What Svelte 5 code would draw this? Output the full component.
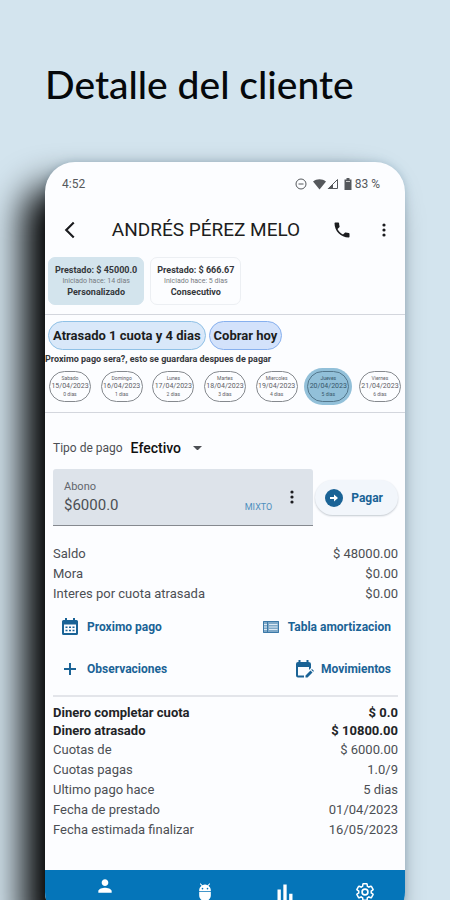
<script lang="ts">
  type Row = { label: string; value: string; strong?: boolean }

  const loans = [
    { amount: 'Prestado: $ 45000.0', started: 'Iniciado hace: 14 dias', kind: 'Personalizado' },
    { amount: 'Prestado: $ 666.67', started: 'Iniciado hace: 5 dias', kind: 'Consecutivo' },
  ]

  const days = [
    { name: 'Sabado', date: '15/04/2023', wait: '0 dias' },
    { name: 'Domingo', date: '16/04/2023', wait: '1 dias' },
    { name: 'Lunes', date: '17/04/2023', wait: '2 dias' },
    { name: 'Martes', date: '18/04/2023', wait: '3 dias' },
    { name: 'Miercoles', date: '19/04/2023', wait: '4 dias' },
    { name: 'Jueves', date: '20/04/2023', wait: '5 dias' },
    { name: 'Viernes', date: '21/04/2023', wait: '6 dias' },
  ]

  const balance: Row[] = [
    { label: 'Saldo', value: '$ 48000.00' },
    { label: 'Mora', value: '$0.00' },
    { label: 'Interes por cuota atrasada', value: '$0.00' },
  ]

  const details: Row[] = [
    { label: 'Dinero completar cuota', value: '$ 0.0', strong: true },
    { label: 'Dinero atrasado', value: '$ 10800.00', strong: true },
    { label: 'Cuotas de', value: '$ 6000.00' },
    { label: 'Cuotas pagas', value: '1.0/9' },
    { label: 'Ultimo pago hace', value: '5 dias' },
    { label: 'Fecha de prestado', value: '01/04/2023' },
    { label: 'Fecha estimada finalizar', value: '16/05/2023' },
  ]

  let selectedLoan = $state(0)
  let selectedDay = $state(5)
  let method = $state('Efectivo')
  let amount = $state('$6000.0')
</script>

{#snippet dots()}
  <svg class="dots" viewBox="0 0 24 24" aria-hidden="true">
    <circle cx="12" cy="4.5" r="2.4" />
    <circle cx="12" cy="12" r="2.4" />
    <circle cx="12" cy="19.5" r="2.4" />
  </svg>
{/snippet}

{#snippet rows(items: Row[])}
  <dl class="rows">
    {#each items as item}
      <div class="row" class:strong={item.strong}>
        <dt>{item.label}</dt>
        <dd>{item.value}</dd>
      </div>
    {/each}
  </dl>
{/snippet}

<div class="stage">
  <h1>Detalle del cliente</h1>

  <main class="phone">
    <div class="status">
      <span>4:52</span>
      <div class="status-icons">
        <svg class="dnd" viewBox="0 0 12 12" aria-hidden="true">
          <circle cx="6" cy="6" r="5" fill="none" stroke="currentColor" />
          <path d="M3.5 6h5" stroke="currentColor" />
        </svg>
        <svg class="signal" viewBox="0 0 26 12" aria-hidden="true">
          <path d="M0 3.4C3.8.4 9.2.4 13 3.4L6.5 11.5z" fill="currentColor" />
          <path d="M24.5 1.5v9h-9z" fill="none" stroke="currentColor" />
          <path d="M20 6v5h-5.500z" fill="currentColor" />
        </svg>
        <svg class="battery" viewBox="0 0 8 12" aria-hidden="true">
          <path d="M2.500 0h3v1.500H7.500V12H.5V1.500h2z" fill="currentColor" />
          <path d="M2 3.500h4" stroke="#ccc" />
        </svg>
        <span>83 %</span>
      </div>
    </div>

    <header>
      <button class="icon-button" aria-label="Volver">
        <svg class="back" viewBox="0 0 24 24" aria-hidden="true">
          <path d="M16.500 3L7.500 12l9 9" fill="none" stroke="currentColor" stroke-width="2.600" />
        </svg>
      </button>
      <h2>ANDRÉS PÉREZ MELO</h2>
      <button class="icon-button" aria-label="Llamar">
        <svg class="call" viewBox="0 0 24 24" aria-hidden="true">
          <path fill="currentColor" d="M6.620 10.790c1.440 2.830 3.760 5.140 6.590 6.590l2.200-2.200c.27-.27.67-.36 1.020-.24 1.120.37 2.330.57 3.570.57.55 0 1 .45 1 1V20c0 .55-.45 1-1 1-9.390 0-17-7.610-17-17 0-.55.45-1 1-1h3.500c.55 0 1 .45 1 1 0 1.250.2 2.450.57 3.570.11.35.03.74-.25 1.020l-2.200 2.200z" />
        </svg>
      </button>
      <button class="icon-button" aria-label="Más opciones">{@render dots()}</button>
    </header>

    <section class="loans">
      {#each loans as loan, index}
        <button class="loan" class:active={selectedLoan === index} onclick={() => (selectedLoan = index)}>
          <b>{loan.amount}</b>
          <span>{loan.started}</span>
          <b>{loan.kind}</b>
        </button>
      {/each}
    </section>

    <section class="schedule">
      <div class="chips">
        <button class="chip">Atrasado 1 cuota y 4 dias</button>
        <button class="chip today">Cobrar hoy</button>
      </div>
      <p>Proximo pago sera?, esto se guardara despues de pagar</p>
      <div class="days">
        {#each days as day, index}
          <button class="day" class:active={selectedDay === index} onclick={() => (selectedDay = index)}>
            <span>{day.name}</span>
            <span class="date">{day.date}</span>
            <span>{day.wait}</span>
          </button>
        {/each}
      </div>
    </section>

    <section class="payment">
      <div class="method">
        <label for="method">Tipo de pago</label>
        <div class="select">
          <select id="method" bind:value={method}>
            <option>Efectivo</option>
            <option>Mixto</option>
          </select>
          <svg viewBox="0 0 10 5" aria-hidden="true"><path d="M0 0h10L5 5z" fill="currentColor" /></svg>
        </div>
      </div>

      <div class="pay">
        <div class="field">
          <div class="entry">
            <label for="amount">Abono</label>
            <input id="amount" type="text" bind:value={amount} />
          </div>
          <button class="mixed">MIXTO</button>
          <button class="field-menu" aria-label="Opciones de abono">{@render dots()}</button>
        </div>
        <button class="submit">
          <svg viewBox="0 0 18 18" aria-hidden="true">
            <circle cx="9" cy="9" r="9" fill="currentColor" />
            <path d="M5 8h4V5.500L13 9l-4 3.500V10H5z" fill="#fff" />
          </svg>
          Pagar
        </button>
      </div>

      {@render rows(balance)}
    </section>

    <section class="actions">
      <button>
        <svg viewBox="0 0 18 18" aria-hidden="true">
          <path fill="currentColor" fill-rule="evenodd" d="M4 0h2v2h6V0h2v2h1.500Q17 2 17 3.500v12Q17 17 15.500 17h-13Q1 17 1 15.500v-12Q1 2 2.500 2H4zM3 6.500V15h12V6.500z" />
          <path stroke="currentColor" stroke-width="1.500" stroke-dasharray="2 1.500" d="M4.500 9.200h9M4.500 12.500h9" />
        </svg>
        Proximo pago
      </button>
      <button>
        <svg viewBox="0 0 18 18" aria-hidden="true">
          <path fill="#7fa9c8" d="M1 3h16v12H1z" />
          <path stroke="#dce9f4" d="M7 6.500h8.500M7 9h8.500M7 11.500h8.500M2 6.500h3M2 9h3M2 11.500h3" />
          <path fill="none" stroke="#3c79a8" d="M1.500 3.500h15v11h-15zM5.500 3.500v11" />
        </svg>
        Tabla amortizacion
      </button>
      <button>
        <svg viewBox="0 0 18 18" aria-hidden="true">
          <path fill="none" stroke="currentColor" stroke-width="2" d="M9 3v12M3 9h12" />
        </svg>
        Observaciones
      </button>
      <button>
        <svg viewBox="0 0 18 18" aria-hidden="true">
          <path fill="currentColor" d="M3.500 0h2v2h6V0h2v2Q16 2 16 4v4l-2 2V7H3v8.500h6v2H3q-2 0-2-2V4q0-2 2-2h.5z" />
          <path fill="currentColor" d="M10.500 15.500l5-5 2 2-5 5h-2zM16.200 9.800l.8-.8 2 2-.8.8z" />
        </svg>
        Movimientos
      </button>
    </section>

    <section class="details">
      {@render rows(details)}
    </section>

    <nav>
      <a class="current" href="#clientes" aria-label="Clientes">
        <svg viewBox="0 0 24 24" aria-hidden="true">
          <path fill="currentColor" d="M12 12c2.210 0 4-1.790 4-4s-1.790-4-4-4-4 1.790-4 4 1.790 4 4 4zm0 2c-2.670 0-8 1.340-8 4v2h16v-2c0-2.660-5.330-4-8-4z" />
        </svg>
      </a>
      <a href="#android" aria-label="Android">
        <svg viewBox="0 0 24 24" aria-hidden="true">
          <path fill="currentColor" d="M5 16c0 3.870 3.130 7 7 7s7-3.130 7-7v-4H5v4zM16.120 4.370l2.100-2.100-.82-.83-2.300 2.310C14.160 3.280 13.120 3 12 3s-2.160.28-3.090.75L6.600 1.440l-.82.83 2.100 2.100C6.140 5.640 5 7.680 5 10v1h14v-1c0-2.320-1.140-4.360-2.880-5.630zM9 9c-.55 0-1-.45-1-1s.45-1 1-1 1 .45 1 1-.45 1-1 1zm6 0c-.55 0-1-.45-1-1s.45-1 1-1 1 .45 1 1-.45 1-1 1z" />
        </svg>
      </a>
      <a href="#reportes" aria-label="Reportes">
        <svg viewBox="0 0 24 24" aria-hidden="true">
          <path fill="currentColor" d="M3 9h4v13H3zM10 3h4v19h-4zM17 14h4v8h-4z" />
        </svg>
      </a>
      <a href="#ajustes" aria-label="Ajustes">
        <svg viewBox="0 0 24 24" aria-hidden="true">
          <path fill="none" stroke="currentColor" stroke-width="1.800" d="M19.430 12.980c.04-.32.07-.64.07-.98 0-.34-.03-.66-.07-.98l2.110-1.650c.19-.15.24-.42.12-.64l-2-3.460c-.09-.16-.26-.25-.44-.25-.06 0-.12.01-.17.03l-2.490 1c-.52-.4-1.080-.73-1.690-.98l-.38-2.650C14.460 2.180 14.250 2 14 2h-4c-.25 0-.46.18-.49.42l-.38 2.650c-.61.25-1.170.59-1.690.98l-2.490-1c-.06-.02-.12-.03-.18-.03-.17 0-.34.09-.43.25l-2 3.460c-.13.22-.07.49.12.64l2.110 1.650c-.04.32-.07.65-.07.98 0 .33.03.66.07.98l-2.110 1.650c-.19.15-.24.42-.12.64l2 3.460c.09.16.26.25.44.25.06 0 .12-.01.17-.03l2.490-1c.52.4 1.080.73 1.690.98l.38 2.650c.03.24.24.42.49.42h4c.25 0 .46-.18.49-.42l.38-2.650c.61-.25 1.170-.59 1.690-.98l2.490 1c.06.02.12.03.18.03.17 0 .34-.09.43-.25l2-3.460c.12-.22.07-.49-.12-.64z" />
          <circle cx="12" cy="12" r="3.500" fill="none" stroke="currentColor" stroke-width="2" />
        </svg>
      </a>
    </nav>
  </main>
</div>

<style>
  :global(body) {
    margin: 0;
    background: #d3e4ee;
  }

  .stage {
    --ink: #1c1d20;
    --muted: #4c4f54;
    --blue: #1a6396;
    --line: #d3d6dd;
    box-sizing: border-box;
    height: 100vh;
    overflow: hidden;
    padding: 60px 10% 0;
    color: var(--ink);
    font-family: Roboto, "Liberation Sans", sans-serif;
  }

  h1 {
    margin: 0 0 54px;
    color: #05080b;
    font: 500 39px/48px Lato, "Open Sans", sans-serif;
    white-space: nowrap;
  }

  h2,
  p,
  dl,
  dd {
    margin: 0;
  }

  button {
    padding: 0;
    border: 0;
    background: none;
    color: inherit;
    font-family: inherit;
    cursor: pointer;
  }

  svg {
    display: block;
    flex: none;
  }

  .phone {
    overflow: hidden;
    border-radius: 30px;
    background: #fcfdff;
    box-shadow:
      -22px 24px 36px 0 #000,
      0 0 8px #a9c4d4;
  }

  .status {
    display: flex;
    align-items: center;
    justify-content: space-between;
    height: 44px;
    padding: 0 25px 0 17px;
    color: #55585c;
    font: 12px/16px Roboto, sans-serif;
  }

  .status-icons {
    display: flex;
    align-items: center;
  }

  .dnd {
    width: 12px;
    margin-right: 6px;
  }

  .signal {
    width: 26px;
    margin-right: 5px;
  }

  .battery {
    width: 8px;
    margin-right: 3px;
  }

  header {
    display: flex;
    align-items: center;
    height: 48px;
    padding-left: 4px;
  }

  h2 {
    flex: 1;
    font-size: 19px;
    font-weight: 400;
    line-height: 24px;
    text-align: center;
    white-space: nowrap;
  }

  .icon-button {
    display: grid;
    place-items: center;
    width: 42px;
    height: 40px;
  }

  .back,
  .call {
    width: 20px;
  }

  .dots {
    width: 16px;
    fill: currentColor;
  }

  .loans {
    display: flex;
    gap: 6px;
    padding: 3px 3px 9px;
    border-bottom: 1px solid var(--line);
  }

  .loan {
    display: flex;
    flex-direction: column;
    align-items: center;
    padding: 7px 6px 6px;
    border: 1px solid #eceff3;
    border-radius: 7px;
    color: #34373b;
    font-size: 9px;
    line-height: 11px;
  }

  .loan span {
    color: #777b80;
    font-size: 7px;
  }

  .loan.active {
    border-color: #d3e4ed;
    background: #d3e4ed;
  }

  .schedule {
    padding: 6px 0 7px;
    border-bottom: 1px solid var(--line);
  }

  .chips {
    display: flex;
    gap: 3px;
    padding: 0 3px;
  }

  .chip {
    height: 29px;
    padding: 0 4px;
    border: 1px solid #8fc1e6;
    border-radius: 15px;
    background: #d9e8f9;
    font-size: 13px;
    font-weight: 700;
  }

  .chip.today {
    border-color: #87b0ee;
    background: #d3e2fb;
  }

  .schedule p {
    color: #34373b;
    font-size: 9px;
    font-weight: 700;
    line-height: 18px;
  }

  .days {
    display: flex;
    justify-content: space-between;
    padding: 0 1px;
  }

  .day {
    display: flex;
    flex-direction: column;
    align-items: center;
    justify-content: center;
    width: 48px;
    height: 37px;
    border: 3px solid transparent;
    border-radius: 19px;
    position: relative;
    color: #5c6065;
    font-size: 5px;
    line-height: 7px;
  }

  .day::before {
    content: "";
    position: absolute;
    inset: 0;
    border: 1px solid #85898e;
    border-radius: 16px;
  }

  .day .date {
    font-size: 7px;
    line-height: 9px;
  }

  .day.active {
    background: #92c0d9;
    color: #36566a;
  }

  .day.active::before {
    border-color: #53778c;
  }

  .payment {
    padding: 24px 7px 0 8px;
  }

  .method {
    display: flex;
    align-items: center;
    gap: 8px;
    height: 22px;
    color: var(--muted);
    font-size: 12px;
  }

  .select {
    display: flex;
    align-items: center;
    color: var(--muted);
  }

  .select select {
    appearance: none;
    width: 62px;
    padding: 0;
    border: 0;
    background: none;
    color: #111;
    font: 500 14px/20px Roboto, sans-serif;
  }

  .select svg {
    width: 9px;
  }

  .pay {
    display: flex;
    align-items: center;
    gap: 2px;
    margin: 10px 0 18px;
  }

  .field {
    display: flex;
    flex: 1;
    min-width: 0;
    box-sizing: border-box;
    height: 57px;
    padding: 0 13px 0 11px;
    border-bottom: 1px solid #85898f;
    border-radius: 3px 3px 0 0;
    background: #dde3ea;
  }

  .entry {
    display: flex;
    flex: 1;
    flex-direction: column;
    min-width: 0;
    padding-top: 10px;
    color: #62676d;
    font-size: 11px;
    line-height: 16px;
  }

  .entry input {
    width: 100%;
    padding: 0;
    border: 0;
    background: none;
    color: #4b4f54;
    font: 15px/20px Roboto, sans-serif;
  }

  .mixed {
    align-self: flex-end;
    margin: 0 12px 12px 0;
    color: #4f8fbd;
    font-size: 9px;
    line-height: 12px;
  }

  .submit {
    display: flex;
    align-items: center;
    gap: 8px;
    height: 35px;
    padding: 0 15px 0 10px;
    border-radius: 18px;
    background: #f2f6fb;
    box-shadow: 0 1px 2px #c3c9d0;
    color: var(--blue);
    font-size: 12px;
    font-weight: 700;
  }

  .submit svg {
    width: 18px;
  }

  .rows {
    color: var(--muted);
    font-size: 13px;
    line-height: 20px;
  }

  .row {
    display: flex;
    justify-content: space-between;
  }

  .row.strong {
    color: #222427;
    font-weight: 700;
    line-height: 18px;
  }

  .actions {
    display: grid;
    grid-template-columns: auto auto;
    justify-content: space-between;
    row-gap: 18px;
    margin: 0 7px 0 8px;
    padding: 11px 7px 14px 8px;
    border-bottom: 2px solid #e3e5ea;
  }

  .actions button {
    display: flex;
    align-items: center;
    gap: 8px;
    height: 24px;
    color: var(--blue);
    font-size: 12px;
    font-weight: 700;
  }

  .actions button:nth-child(even) {
    justify-self: end;
  }

  .actions svg {
    width: 18px;
    overflow: visible;
  }

  .details {
    padding: 7px 7px 30px 8px;
  }

  nav {
    display: flex;
    height: 52px;
    background: #0575b9;
    color: #fff;
  }

  nav a {
    display: flex;
    flex: 2;
    justify-content: center;
    padding-top: 12px;
    color: inherit;
  }

  nav a.current {
    flex: 3;
    padding-top: 6px;
  }

  nav svg {
    width: 20px;
    height: 20px;
  }
</style>
